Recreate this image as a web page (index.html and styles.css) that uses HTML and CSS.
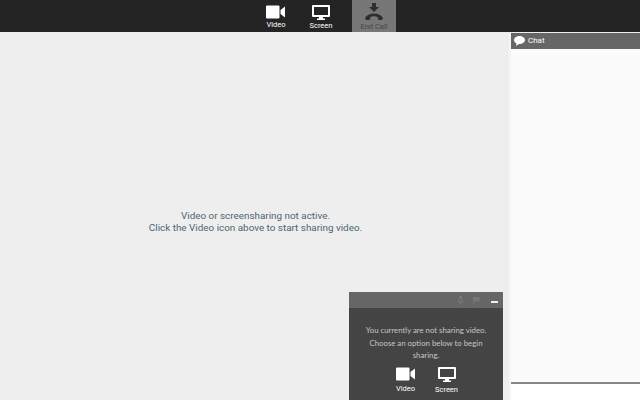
FILE: index.html
```html
<!DOCTYPE html>
<html lang="en">
<head>
<meta charset="utf-8">
<title>Call</title>
<link rel="stylesheet" href="styles.css">
</head>
<body>
<header class="topbar">
  <div class="tool">
    <svg class="ico-video" viewBox="0 0 20 14"><path d="M0 1.5Q0 .5 1 .5H12.500Q13.500 .5 13.500 1.500V12.500Q13.500 13.500 12.500 13.500H1Q0 13.500 0 12.500ZM14.500 5 19 1.500V12.500L14.500 9Z" fill="#fff"/></svg>
    <span>Video</span>
  </div>
  <div class="tool tool-screen">
    <svg class="ico-screen" viewBox="0 0 18 15"><path fill-rule="evenodd" d="M1 0H17Q18 0 18 1V11Q18 12 17 12H11V13.500H13V15H5V13.500H7V12H1Q0 12 0 11V1Q0 0 1 0ZM2 2V10H16V2Z" fill="#fff"/></svg>
    <span>Screen</span>
  </div>
  <div class="tool tool-end">
    <svg class="ico-end" viewBox="0 0 20 18"><path d="M8 0H12V4H15L10 9 5 4H8Z" fill="#2e2e2e"/><path d="M1 15C4 9 16 9 19 15L18 17H14.500L13.500 14C12 13 8 13 6.500 14L5.500 17H2Z" fill="#2e2e2e"/></svg>
    <span>End Call</span>
  </div>
</header>
<div class="workspace">
  <main class="stage">
    <p class="notice">Video or screensharing not active.<br>Click the Video icon above to start sharing video.</p>
    <section class="self">
      <div class="self-head">
        <svg class="ico-mini" viewBox="0 0 8 10"><path d="M2.500 0H5.500V6H2.500ZM1 4V6.500L2.500 8H3.500V10H4.500V8H5.500L7 6.500V4" fill="#777"/></svg>
        <svg class="ico-mini" viewBox="0 0 10 10"><path d="M1 1H9L8 6H2V10H1Z" fill="#777"/></svg>
        <span class="minimize"></span>
      </div>
      <div class="self-body">
        <p>You currently are not sharing video.<br>Choose an option below to begin<br>sharing.</p>
        <div class="self-tools">
          <div class="tool">
            <svg class="ico-video" viewBox="0 0 20 14"><path d="M0 1.5Q0 .5 1 .5H12.500Q13.500 .5 13.500 1.500V12.500Q13.500 13.500 12.500 13.500H1Q0 13.500 0 12.500ZM14.500 5 19 1.500V12.500L14.500 9Z" fill="#fff"/></svg>
            <span>Video</span>
          </div>
          <div class="tool">
            <svg class="ico-screen" viewBox="0 0 18 15"><path fill-rule="evenodd" d="M1 0H17Q18 0 18 1V11Q18 12 17 12H11V13.500H13V15H5V13.500H7V12H1Q0 12 0 11V1Q0 0 1 0ZM2 2V10H16V2Z" fill="#fff"/></svg>
            <span>Screen</span>
          </div>
        </div>
      </div>
    </section>
  </main>
  <aside class="chat">
    <div class="chat-head">
      <svg class="ico-bubble" viewBox="0 0 11 10"><path d="M5.500 0C8.500 0 11 1.700 11 4S8.500 8 5.500 8H5L2 10 2.500 7.400C1 6.700 0 5.500 0 4 0 1.700 2.500 0 5.500 0Z" fill="#fff"/></svg>
      <span>Chat</span>
    </div>
    <div class="chat-log"></div>
    <div class="chat-input"></div>
  </aside>
</div>
</body>
</html>
```

FILE: styles.css
```css
* { box-sizing: border-box; }
html, body { margin: 0; height: 100%; }
body {
  width: 640px;
  height: 400px;
  overflow: hidden;
  display: flex;
  flex-direction: column;
  background: #eee;
  font-family: Roboto, "Liberation Sans", sans-serif;
}
p { margin: 0; }

.topbar {
  flex: 0 0 32px;
  display: flex;
  justify-content: center;
  padding-left: 10px;
  background: #242424;
}
.topbar .tool { width: 44px; height: 32px; padding-top: 5px; }
.topbar .tool-screen { margin-left: 1px; }
.topbar .tool-end { background: #777; margin-left: 9px; padding-top: 3px; }
.tool {
  display: flex;
  flex-direction: column;
  align-items: center;
  color: #fff;
  font-size: 7.5px;
  line-height: 8px;
}
.tool span { margin-top: 2px; }
.tool-end { color: #484848; }
.ico-video { width: 20px; height: 14px; display: block; }
.ico-screen { width: 18px; height: 15px; display: block; }
.ico-end { width: 20px; height: 18px; display: block; }

.workspace { flex: 1; display: flex; min-height: 0; }
.stage {
  position: relative;
  flex: 0 0 509px;
  display: flex;
  align-items: center;
  justify-content: center;
  padding-top: 12px;
  padding-left: 2px;
}
.notice {
  color: #4f6470;
  font-family: Roboto, sans-serif;
  font-size: 9.9px;
  line-height: 12px;
  text-align: center;
}

.self {
  position: absolute;
  left: 349px;
  top: 260px;
  width: 154px;
  height: 108px;
  display: flex;
  flex-direction: column;
  background: #444;
}
.self-head {
  flex: 0 0 16px;
  display: flex;
  align-items: center;
  justify-content: flex-end;
  gap: 7px;
  padding-right: 5px;
  background: #666;
}
.ico-mini { width: 9px; height: 9px; display: block; }
.minimize { width: 7px; height: 2px; background: #eee; margin: 4px 0 0 3px; }
.self-body {
  flex: 1;
  padding-top: 16px;
  display: flex;
  flex-direction: column;
  align-items: center;
}
.self-body p {
  color: #c4c4c4;
  font-family: Lato, sans-serif;
  font-size: 7.8px;
  line-height: 12.500px;
  text-align: center;
}
.self-tools { display: flex; gap: 21px; margin-top: 5px; }
.self-tools .tool { width: 20px; }
.self-tools .tool span { margin-top: 4px; }

.chat {
  flex: 0 0 131px;
  display: flex;
  flex-direction: column;
  border-left: 2px solid #f5f5f5;
}
.chat-head {
  flex: 0 0 16px;
  display: flex;
  align-items: center;
  gap: 3px;
  padding: 0 0 1px 3px;
  margin-top: 1px;
  background: #666;
  color: #fff;
  font-size: 8px;
}
.ico-bubble { width: 11px; height: 10px; display: block; }
.chat-log { flex: 1; background: #fbfbfb; }
.chat-input { flex: 0 0 18px; background: #fff; border-top: 2px solid #888; }
```
